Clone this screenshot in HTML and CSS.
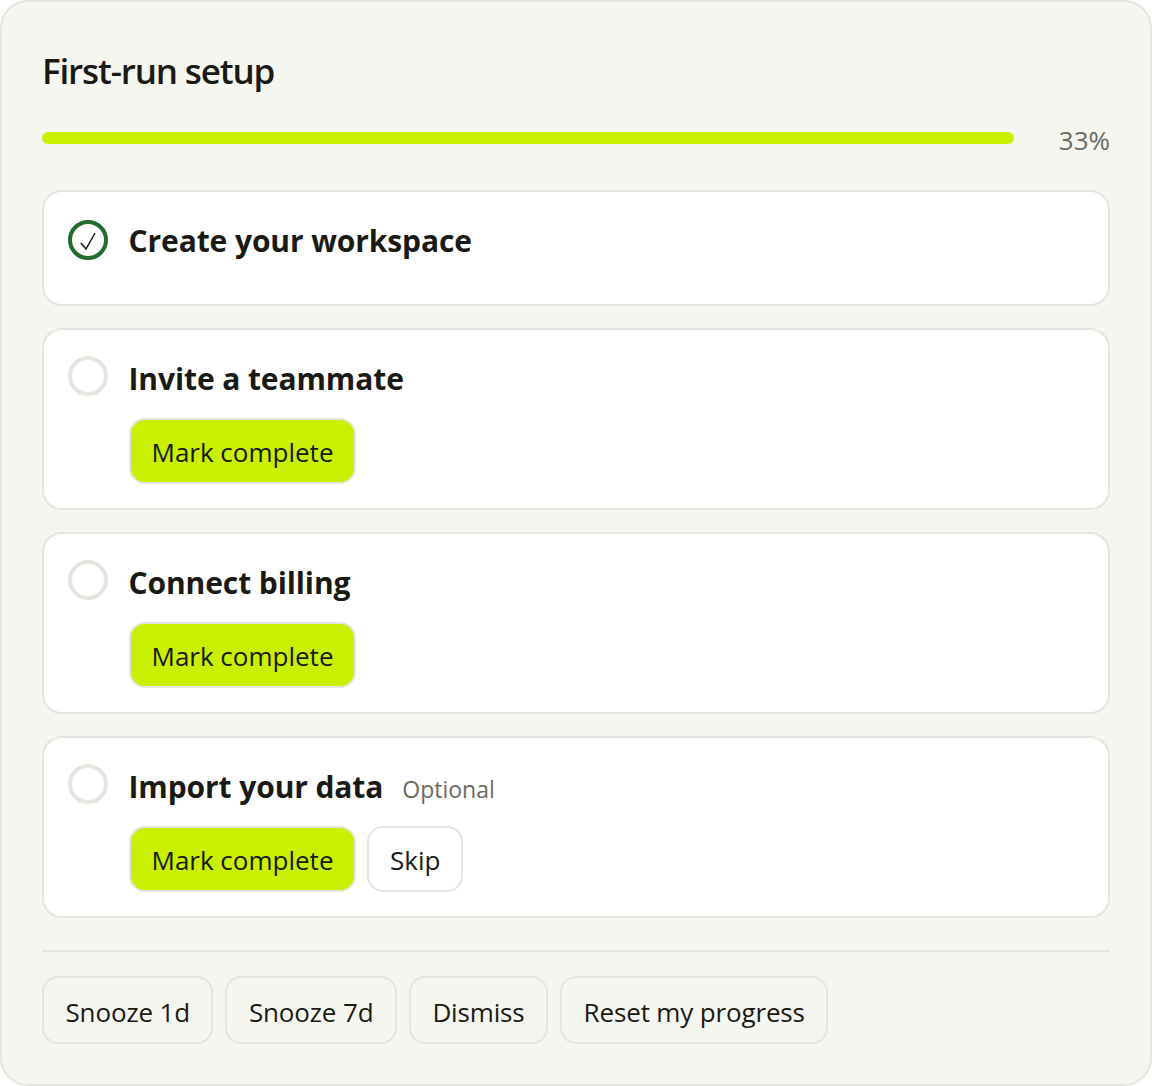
FILE: index.html
```html
<!DOCTYPE html>
<html lang="en">
<head>
  <meta charset="UTF-8" />
  <title>First-run setup</title>
  <link rel="stylesheet" href="styles.css">
</head>
<body>
  <div class="panel">
    <h1>First-run setup</h1>

    <div class="progress">
      <div class="track"><div class="fill"></div></div>
      <span class="percent">33%</span>
    </div>

    <div class="step step-done">
      <div class="circle circle-done">
        <svg class="tick" viewBox="0 0 20 24" width="20" height="24"><path d="M2.8 15 8 21 17 5" fill="none" stroke="#1a1a14" stroke-width="1.5"/></svg>
      </div>
      <div class="step-body">
        <div class="step-title"><strong>Create your workspace</strong></div>
      </div>
    </div>

    <div class="step">
      <div class="circle"></div>
      <div class="step-body">
        <div class="step-title"><strong>Invite a teammate</strong></div>
        <div class="actions">
          <button class="btn btn-primary">Mark complete</button>
        </div>
      </div>
    </div>

    <div class="step">
      <div class="circle"></div>
      <div class="step-body">
        <div class="step-title"><strong>Connect billing</strong></div>
        <div class="actions">
          <button class="btn btn-primary">Mark complete</button>
        </div>
      </div>
    </div>

    <div class="step">
      <div class="circle"></div>
      <div class="step-body">
        <div class="step-title"><strong>Import your data</strong><span class="optional">Optional</span></div>
        <div class="actions">
          <button class="btn btn-primary">Mark complete</button>
          <button class="btn btn-white">Skip</button>
        </div>
      </div>
    </div>

    <div class="footer">
      <button class="btn btn-plain">Snooze 1d</button>
      <button class="btn btn-plain">Snooze 7d</button>
      <button class="btn btn-plain">Dismiss</button>
      <button class="btn btn-plain">Reset my progress</button>
    </div>
  </div>
</body>
</html>
```

FILE: styles.css
```css
body {
  margin: 0;
  font-family: "Open Sans", "Noto Sans", sans-serif;
  color: #1a1a14;
  background: #fff;
}
.panel {
  box-sizing: border-box;
  height: 1086px;
  padding: 40px;
  background: #f6f6f1;
  border: 2px solid #e5e5df;
  border-radius: 28px;
}
h1 {
  margin: 5px 0 0;
  font-size: 35px;
  line-height: 48px;
  font-weight: 600;
  letter-spacing: -1.15px;
}
.progress {
  display: flex;
  gap: 45px;
  margin-top: 37px;
  height: 58px;
}
.track {
  flex: 1;
  height: 12px;
}
.fill {
  height: 12px;
  background: #c8f000;
  border-radius: 6px;
}
.percent {
  font-size: 26px;
  line-height: 34px;
  color: #6b6b60;
  margin-top: -9px;
}
.step {
  display: flex;
  gap: 20.5px;
  padding: 27px 24px 24px;
  margin-bottom: 22px;
  background: #fff;
  border: 2px solid #e5e5df;
  border-radius: 20px;
}
.step-done {
  min-height: 116px;
  box-sizing: border-box;
}
.circle {
  box-sizing: border-box;
  width: 40px;
  height: 40px;
  flex: none;
  border: 4px solid #e5e5df;
  border-radius: 50%;
  margin-top: -1px;
}
.circle-done {
  display: flex;
  align-items: center;
  justify-content: center;
  border-color: #256b2e;
  margin-top: 1px;
}
.step-title {
  display: flex;
  align-items: baseline;
  height: 44px;
  font-size: 30px;
  line-height: 44px;
}
.step-title strong {
  font-weight: 700;
  letter-spacing: -0.1px;
}
.optional {
  margin-left: 19px;
  font-size: 23px;
  color: #6b6b60;
}
.actions {
  display: flex;
  gap: 10.5px;
  margin-top: 17px;
}
.btn {
  box-sizing: border-box;
  height: 66px;
  padding: 2px 21px 0;
  font-family: inherit;
  font-size: 26px;
  color: #1a1a14;
  border: 2px solid #e5e5df;
  border-radius: 16px;
}
.btn-primary { background: #c8f000; }
.btn-white { background: #fff; }
.btn-plain { background: #f6f6f1; height: 68px; padding: 4px 21.5px 0; letter-spacing: -0.15px; }
.footer {
  display: flex;
  gap: 12px;
  margin-top: 32px;
  padding-top: 24px;
  border-top: 2px solid #e5e5df;
}
```
